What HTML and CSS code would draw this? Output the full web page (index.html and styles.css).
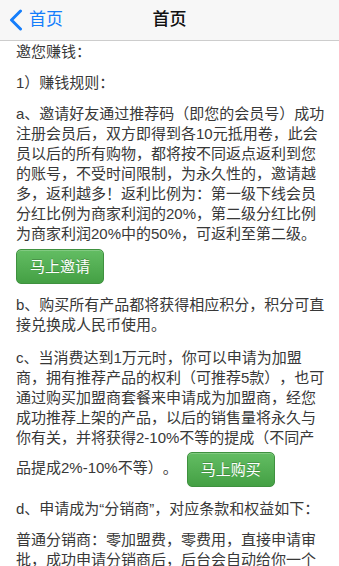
FILE: index.html
```html
<!DOCTYPE html>
<html lang="zh-CN">
<head>
<meta charset="utf-8">
<title>首页</title>
<link rel="stylesheet" href="styles.css">
</head>
<body>
<header class="nav">
  <a class="back" href="#">
    <svg class="chevron" viewBox="0 0 14 22" width="14" height="22" aria-hidden="true">
      <polyline points="11.5,2 2.5,11 11.5,20" fill="none" stroke="#157efb" stroke-width="3" stroke-linecap="round" stroke-linejoin="round"/>
    </svg>
    <span>首页</span>
  </a>
  <h1 class="title">首页</h1>
  <span class="spacer"></span>
</header>
<main class="content">
  <p>邀您赚钱：</p>
  <p>1）赚钱规则：</p>
  <p class="before-btn">a、邀请好友通过推荐码（即您的会员号）成功<br>注册会员后，双方即得到各10元抵用卷，此会<br>员以后的所有购物，都将按不同返点返利到您<br>的账号，不受时间限制，为永久性的，邀请越<br>多，返利越多！返利比例为：第一级下线会员<br>分红比例为商家利润的20%，第二级分红比例<br>为商家利润20%中的50%，可返利至第二级。</p>
  <div class="action"><a class="btn" href="#">马上邀请</a></div>
  <p class="wide-gap">b、购买所有产品都将获得相应积分，积分可直<br>接兑换成人民币使用。</p>
  <p class="with-btn">c、当消费达到1万元时，你可以申请为加盟<br>商，拥有推荐产品的权利（可推荐5款），也可<br>通过购买加盟商套餐来申请成为加盟商，经您<br>成功推荐上架的产品，以后的销售量将永久与<br>你有关，并将获得2-10%不等的提成（不同产<br>品提成2%-10%不等）。<a class="btn inline" href="#">马上购买</a></p>
  <p>d、申请成为“分销商”，对应条款和权益如下：</p>
  <p>普通分销商：零加盟费，零费用，直接申请审<br>批，成功申请分销商后，后台会自动给你一个</p>
</main>
</body>
</html>
```

FILE: styles.css
```css
html {
  overflow: hidden;
}

body {
  margin: 0;
  background: #ffffff;
  font-family: "Liberation Sans", "Noto Sans CJK SC", sans-serif;
  font-size: 15px;
  line-height: 20px;
  color: #383838;
  text-spacing-trim: space-all;
}

.nav {
  display: grid;
  grid-template-columns: 1fr auto 1fr;
  align-items: center;
  height: 40px;
  background: #f7f7f7;
  border-bottom: 1px solid #cdcdcd;
}

.back {
  display: flex;
  align-items: center;
  gap: 6px;
  padding-left: 9px;
  color: #157efb;
  text-decoration: none;
  font-size: 17px;
}

.chevron {
  display: block;
}

.title {
  margin: 0;
  font-size: 17px;
  font-weight: 500;
  color: #111111;
  line-height: 20px;
}

.content {
  padding: 1px 4px 0 16px;
}

.content p {
  margin: 0 0 11px;
  white-space: nowrap;
}

.content p.before-btn {
  margin-bottom: 5px;
}

.content p.wide-gap {
  margin-bottom: 13px;
}

.content p.with-btn {
  margin-bottom: 8px;
}

.action {
  margin-bottom: 11px;
}

.btn {
  display: inline-block;
  box-sizing: border-box;
  height: 35px;
  line-height: 33px;
  padding: 0 13px;
  font-size: 15px;
  color: #ffffff;
  text-decoration: none;
  text-shadow: 0 -1px 0 rgba(0, 0, 0, 0.2);
  background: linear-gradient(#63bd63, #44a044);
  border: 1px solid #3f913f;
  border-radius: 5px;
  box-shadow: inset 0 1px 0 rgba(255, 255, 255, 0.2);
}

.btn.inline {
  vertical-align: middle;
  margin: 4px 0 4px 9px;
}
```
